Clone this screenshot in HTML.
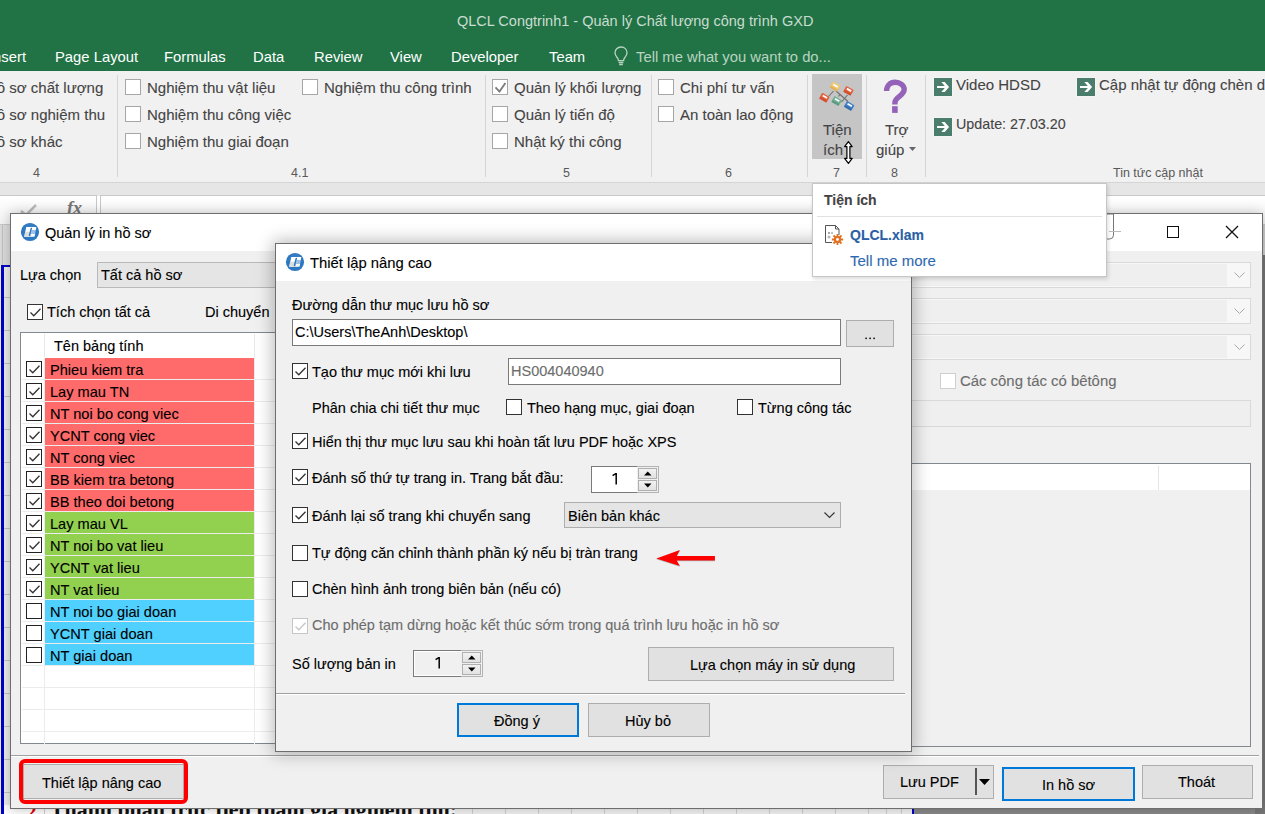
<!DOCTYPE html>
<html><head><meta charset="utf-8">
<style>
*{box-sizing:border-box}
html,body{margin:0;padding:0}
body{width:1265px;height:814px;overflow:hidden;position:relative;background:#fff;font-family:"Liberation Sans",sans-serif;color:#000;-webkit-text-stroke:0.12px currentColor}
.a{position:absolute}
.t{position:absolute;white-space:nowrap;line-height:1}
.cb{position:absolute;width:15px;height:15px;border:1px solid #333;background:#fff}
.rcb{position:absolute;width:16px;height:16px;border:1px solid #a6a6a6;background:#fff}
.tab{-webkit-text-stroke:0;position:absolute;top:50px;font-size:14.8px;color:#fff;white-space:nowrap;line-height:1}
.rt{-webkit-text-stroke:0.1px currentColor;position:absolute;font-size:15px;color:#444;white-space:nowrap;line-height:1}
.gl{-webkit-text-stroke:0;position:absolute;top:166.5px;font-size:12.5px;color:#595959;white-space:nowrap;line-height:1}
.sep{position:absolute;top:75px;width:1px;height:102px;background:#d6d6d6}
.dt{position:absolute;font-size:14.5px;color:#000;white-space:nowrap;line-height:1}
.btn{position:absolute;background:#e1e1e1;border:1px solid #adadad}
.row{position:absolute;left:21px;width:233px;height:22px}
</style></head><body>

<!-- title bar + tabs -->
<div class="a" style="left:0;top:0;width:1265px;height:71px;background:#217346"></div>
<div class="t" style="left:457px;top:14px;font-size:14.5px;color:#c9dccf;-webkit-text-stroke:0">QLCL Congtrinh1 - Quản lý Chất lượng công trình GXD</div>

<div class="tab" style="left:-11px">Insert</div>
<div class="tab" style="left:55px">Page Layout</div>
<div class="tab" style="left:164px">Formulas</div>
<div class="tab" style="left:253px">Data</div>
<div class="tab" style="left:314px">Review</div>
<div class="tab" style="left:390px">View</div>
<div class="tab" style="left:451px">Developer</div>
<div class="tab" style="left:549px">Team</div>
<svg class="a" style="left:613px;top:45px" width="16" height="22" viewBox="0 0 16 22"><path d="M8 2 C4.4 2 2 4.6 2 7.8 C2 10.2 3.4 11.6 4.5 13 C5.2 13.9 5.4 14.8 5.4 15.6 H10.6 C10.6 14.8 10.8 13.9 11.5 13 C12.6 11.6 14 10.2 14 7.8 C14 4.6 11.6 2 8 2Z" fill="none" stroke="#b9d3c0" stroke-width="1.3"/><path d="M5.6 17.4H10.4M6.2 19.4H9.8" stroke="#b9d3c0" stroke-width="1.5"/></svg>
<div class="tab" style="left:636px;color:#b9d3c0">Tell me what you want to do...</div>

<!-- ribbon -->
<div class="a" style="left:0;top:71px;width:1265px;height:112px;background:#f1f1f1;border-bottom:1px solid #d5d5d5"></div>
<div class="a" style="left:0;top:183px;width:1265px;height:13px;background:#e6e6e6"></div>


<!-- group 4 -->
<div class="rt" style="left:-14px;top:79.5px">Hồ sơ chất lượng</div>
<div class="rt" style="left:-14px;top:106.5px">Hồ sơ nghiệm thu</div>
<div class="rt" style="left:-14px;top:133.5px">Hồ sơ khác</div>
<div class="gl" style="left:33px">4</div>
<div class="sep" style="left:117px"></div>
<!-- group 4.1 -->
<div class="rcb" style="left:125px;top:79px"></div><div class="rt" style="left:147px;top:79.5px">Nghiệm thu vật liệu</div>
<div class="rcb" style="left:125px;top:106px"></div><div class="rt" style="left:147px;top:106.5px">Nghiệm thu công việc</div>
<div class="rcb" style="left:125px;top:133px"></div><div class="rt" style="left:147px;top:133.5px">Nghiệm thu giai đoạn</div>
<div class="rcb" style="left:302px;top:79px"></div><div class="rt" style="left:324px;top:79.5px">Nghiệm thu công trình</div>
<div class="gl" style="left:291px">4.1</div>
<div class="sep" style="left:485px"></div>
<!-- group 5 -->
<div class="rcb" style="left:492px;top:79px"><svg class="a" style="left:1px;top:1px" width="14" height="14" viewBox="0 0 14 14"><path d="M1.5 6.3 L5.5 10.5 L11.4 2" fill="none" stroke="#7a7a7a" stroke-width="1.8"/></svg></div><div class="rt" style="left:514px;top:79.5px">Quản lý khối lượng</div>
<div class="rcb" style="left:492px;top:106px"></div><div class="rt" style="left:514px;top:106.5px">Quản lý tiến độ</div>
<div class="rcb" style="left:492px;top:133px"></div><div class="rt" style="left:514px;top:133.5px">Nhật ký thi công</div>
<div class="gl" style="left:563px">5</div>
<div class="sep" style="left:651px"></div>
<!-- group 6 -->
<div class="rcb" style="left:658px;top:79px"></div><div class="rt" style="left:680px;top:79.5px">Chi phí tư vấn</div>
<div class="rcb" style="left:658px;top:106px"></div><div class="rt" style="left:680px;top:106.5px">An toàn lao động</div>
<div class="gl" style="left:725px">6</div>
<div class="sep" style="left:807px"></div>
<!-- group 7 -->
<div class="a" style="left:812px;top:74px;width:50px;height:85px;background:#c5c5c5"></div>
<svg class="a" style="left:814px;top:78px" width="46" height="36" viewBox="0 0 46 36"><path d="M19.5 13 L14.5 18.5 M22 13 L34 23.5 M24.5 18.5 L26 16 M33.5 17 L27.5 24" stroke="#6e6e6e" stroke-width="1.1" fill="none"/><g transform="translate(21,8.6) rotate(30) scale(0.9)"><rect x="-4.6" y="-2.6" width="9.2" height="6.4" fill="#e3b257"/><rect x="-4.6" y="-3.6" width="9.2" height="5" fill="#f4c96e"/><rect x="-2.8" y="-2.2" width="5.6" height="2" fill="#fff"/></g><g transform="translate(34.5,12.8) rotate(30) scale(0.9)"><rect x="-4.6" y="-2.6" width="9.2" height="6.4" fill="#cf4f2e"/><rect x="-4.6" y="-3.6" width="9.2" height="5" fill="#e5603c"/><rect x="-2.8" y="-2.2" width="5.6" height="2" fill="#fff"/></g><g transform="translate(10.4,19.7) rotate(30) scale(0.9)"><rect x="-4.6" y="-2.6" width="9.2" height="6.4" fill="#cf4f2e"/><rect x="-4.6" y="-3.6" width="9.2" height="5" fill="#e5603c"/><rect x="-2.8" y="-2.2" width="5.6" height="2" fill="#fff"/></g><g transform="translate(22.6,23) rotate(30) scale(0.9)"><rect x="-4.6" y="-2.6" width="9.2" height="6.4" fill="#5c9a80"/><rect x="-4.6" y="-3.6" width="9.2" height="5" fill="#70ae94"/><rect x="-2.8" y="-2.2" width="5.6" height="2" fill="#fff"/></g><g transform="translate(35.2,27.9) rotate(30) scale(0.9)"><rect x="-4.6" y="-2.6" width="9.2" height="6.4" fill="#336db0"/><rect x="-4.6" y="-3.6" width="9.2" height="5" fill="#4281c6"/><rect x="-2.8" y="-2.2" width="5.6" height="2" fill="#fff"/></g></svg>
<div class="rt" style="left:823px;top:122px">Tiện</div>
<div class="rt" style="left:823px;top:142px">ích</div>
<div class="gl" style="left:833px">7</div>
<div class="sep" style="left:866px"></div>
<!-- group 8 -->
<svg class="a" style="left:874px;top:76px" width="44" height="42" viewBox="0 0 44 42"><path d="M12.6 15 C12.6 9.5 16.2 6.3 21.1 6.3 C26.2 6.3 30.2 9.3 30.2 13.3 C30.2 17.3 26.5 19.5 23.8 21.8 C21.6 23.6 20.9 25 20.9 27 V28.6" fill="none" stroke="#9462b8" stroke-width="5.4"/><rect x="18.1" y="30.2" width="5.6" height="6.7" fill="#9462b8"/></svg>
<div class="rt" style="left:885px;top:122px">Trợ</div>
<div class="rt" style="left:876px;top:142px">giúp</div>
<svg class="a" style="left:909px;top:147px" width="7" height="4"><path d="M0 0H7L3.5 4Z" fill="#666"/></svg>
<div class="gl" style="left:891px">8</div>
<div class="sep" style="left:925px"></div>
<!-- tin tuc -->
<svg class="a" style="left:933px;top:77px" width="20" height="20" viewBox="-1 -1 20 20"><rect x="-0.5" y="-0.5" width="19" height="19" fill="#fff" opacity=".6"/><rect x="0" y="0" width="18" height="18" fill="#4a7d6b"/><path d="M3 8H12V10H3Z" fill="#fff"/><path d="M7.3 4.1 H10.7 L15.1 9 L10.7 13.9 H7.3 L11.7 9Z" fill="#fff"/></svg>
<div class="rt" style="left:956px;top:77px">Video HDSD</div>
<svg class="a" style="left:933px;top:117px" width="20" height="20" viewBox="-1 -1 20 20"><rect x="-0.5" y="-0.5" width="19" height="19" fill="#fff" opacity=".6"/><rect x="0" y="0" width="18" height="18" fill="#4a7d6b"/><path d="M3 8H12V10H3Z" fill="#fff"/><path d="M7.3 4.1 H10.7 L15.1 9 L10.7 13.9 H7.3 L11.7 9Z" fill="#fff"/></svg>
<div class="rt" style="left:956px;top:117px;font-size:14.3px">Update: 27.03.20</div>
<svg class="a" style="left:1076px;top:77px" width="20" height="20" viewBox="-1 -1 20 20"><rect x="-0.5" y="-0.5" width="19" height="19" fill="#fff" opacity=".6"/><rect x="0" y="0" width="18" height="18" fill="#4a7d6b"/><path d="M3 8H12V10H3Z" fill="#fff"/><path d="M7.3 4.1 H10.7 L15.1 9 L10.7 13.9 H7.3 L11.7 9Z" fill="#fff"/></svg>
<div class="rt" style="left:1099px;top:77px">Cập nhật tự động chèn dữ liệu</div>
<div class="gl" style="left:1113px">Tin tức cập nhật</div>


<!-- formula bar -->
<div class="a" style="left:-2px;top:195px;width:99px;height:30px;background:linear-gradient(#fff,#f4f4f4);border:1px solid #c8c8c8"></div>
<div class="a" style="left:100px;top:195px;width:1170px;height:30px;background:linear-gradient(#fff,#f7f7f7);border:1px solid #c8c8c8"></div>
<div class="t" style="left:67px;top:198px;font:italic bold 18px 'Liberation Serif',serif;color:#777">fx</div>
<svg class="a" style="left:19px;top:203px" width="20" height="12"><path d="M2 8 L7 12 L17 2" fill="none" stroke="#bbb" stroke-width="2.5"/></svg>
<!-- sheet strip left -->
<div class="a" style="left:0;top:225px;width:12px;height:600px;background:#ededed"></div>
<div class="a" style="left:0;top:225px;width:12px;height:40px;background:#dcdcdc"></div>
<div class="a" style="left:2px;top:225px;width:1px;height:40px;background:#c0c0c0"></div>
<div class="a" style="left:4px;top:297px;width:8px;height:1px;background:#c4c4c4"></div><div class="a" style="left:4px;top:330px;width:8px;height:1px;background:#c4c4c4"></div><div class="a" style="left:4px;top:363px;width:8px;height:1px;background:#c4c4c4"></div><div class="a" style="left:4px;top:396px;width:8px;height:1px;background:#c4c4c4"></div><div class="a" style="left:4px;top:429px;width:8px;height:1px;background:#c4c4c4"></div><div class="a" style="left:4px;top:462px;width:8px;height:1px;background:#c4c4c4"></div><div class="a" style="left:4px;top:495px;width:8px;height:1px;background:#c4c4c4"></div><div class="a" style="left:4px;top:528px;width:8px;height:1px;background:#c4c4c4"></div><div class="a" style="left:4px;top:561px;width:8px;height:1px;background:#c4c4c4"></div><div class="a" style="left:4px;top:594px;width:8px;height:1px;background:#c4c4c4"></div><div class="a" style="left:4px;top:627px;width:8px;height:1px;background:#c4c4c4"></div><div class="a" style="left:4px;top:660px;width:8px;height:1px;background:#c4c4c4"></div><div class="a" style="left:4px;top:693px;width:8px;height:1px;background:#c4c4c4"></div><div class="a" style="left:4px;top:726px;width:8px;height:1px;background:#c4c4c4"></div><div class="a" style="left:4px;top:759px;width:8px;height:1px;background:#c4c4c4"></div><div class="a" style="left:4px;top:792px;width:8px;height:1px;background:#c4c4c4"></div>
<div class="a" style="left:1px;top:265px;width:3px;height:549px;background:#0000c8"></div>
<div class="a" style="left:1px;top:265px;width:11px;height:2px;background:#0000c8"></div>
<!-- sheet strip bottom -->
<div class="a" style="left:4px;top:805px;width:1261px;height:9px;background:#fff"></div>
<div class="a" style="left:455px;top:805px;width:457px;height:9px;background:#f3f3f3"></div>
<div class="a" style="left:472px;top:805px;width:1px;height:9px;background:#d0d0d0"></div><div class="a" style="left:505px;top:805px;width:1px;height:9px;background:#d0d0d0"></div><div class="a" style="left:538px;top:805px;width:1px;height:9px;background:#d0d0d0"></div><div class="a" style="left:571px;top:805px;width:1px;height:9px;background:#d0d0d0"></div><div class="a" style="left:604px;top:805px;width:1px;height:9px;background:#d0d0d0"></div><div class="a" style="left:637px;top:805px;width:1px;height:9px;background:#d0d0d0"></div><div class="a" style="left:670px;top:805px;width:1px;height:9px;background:#d0d0d0"></div><div class="a" style="left:703px;top:805px;width:1px;height:9px;background:#d0d0d0"></div><div class="a" style="left:736px;top:805px;width:1px;height:9px;background:#d0d0d0"></div><div class="a" style="left:769px;top:805px;width:1px;height:9px;background:#d0d0d0"></div><div class="a" style="left:802px;top:805px;width:1px;height:9px;background:#d0d0d0"></div><div class="a" style="left:835px;top:805px;width:1px;height:9px;background:#d0d0d0"></div><div class="a" style="left:868px;top:805px;width:1px;height:9px;background:#d0d0d0"></div><div class="a" style="left:901px;top:805px;width:1px;height:9px;background:#d0d0d0"></div>
<div class="a" style="left:44px;top:805px;width:1px;height:9px;background:#d0d0d0"></div>
<div class="a" style="left:886px;top:805px;width:1px;height:9px;background:#d0d0d0"></div>
<div class="a" style="left:912px;top:805px;width:2px;height:9px;background:#0000c8"></div>
<div class="a" style="left:914px;top:805px;width:351px;height:9px;background:#8a8a8a"></div>
<div class="a" style="left:1255px;top:225px;width:10px;height:30px;background:#d0d0d0"></div><div class="a" style="left:1255px;top:255px;width:10px;height:560px;background:#777"></div>
<div class="t" style="left:27px;top:801px;font:bold 19px 'Liberation Serif',serif;color:#d00">2.</div>
<div class="t" style="left:50px;top:797px;font:bold 23px 'Liberation Serif',serif;color:#111;transform:scaleX(0.95);transform-origin:0 0">Thành phần trực tiếp tham gia nghiệm thu:</div>
<!-- DIALOG 1 -->
<div class="a" style="left:10px;top:213px;width:1253px;height:596px;background:#f0f0f0;border:1px solid #6e6e6e;box-shadow:0 0 12px rgba(0,0,0,.25)"></div>
<div class="a" style="left:11px;top:214px;width:1251px;height:37px;background:#fff"></div>

<!-- dialog1 content -->
<svg class="a" style="left:20px;top:222px" width="20" height="20" viewBox="0 0 20 20"><circle cx="10" cy="10" r="9.1" fill="#2d78c2"/><circle cx="10" cy="7" r="6" fill="#3d80c2" opacity=".5"/><path d="M6.3 5.1 H16.4 L15.7 8.5 H11.8 L11.3 12.1 H15.1 L14.5 14.8 H4.2 Z" fill="#fff"/><path d="M5.3 9.8 H11.6 L10.9 14.8 H4.2Z" fill="#dedede"/><path d="M11.8 8.5 H15.7 L15.1 12.1 H11.3Z" fill="#9cc2e6"/><path d="M11.3 6.4 L9.5 13.5" stroke="#2d78c2" stroke-width="1.5" stroke-linecap="round"/></svg>
<div class="t" style="left:45px;top:226px;font-size:14.5px;color:#000">Quản lý in hồ sơ</div>
<div class="dt" style="left:20px;top:268px">Lựa chọn</div>
<div class="btn" style="left:97px;top:262px;width:200px;height:26px;background:#e5e5e5;border-color:#b9b9b9"></div>
<div class="dt" style="left:101px;top:268px">Tất cả hồ sơ</div>
<div class="cb" style="left:27px;top:304px;width:16px;height:16px"><svg class="a" style="left:1px;top:2px" width="13" height="11" viewBox="0 0 13 11"><path d="M1.5 5.5 L4.8 8.8 L11.5 1.8" fill="none" stroke="#333" stroke-width="1.3"/></svg></div>
<div class="dt" style="left:47px;top:305px">Tích chọn tất cả</div>
<div class="dt" style="left:205px;top:305px">Di chuyển</div>
<div class="a" style="left:20px;top:332px;width:300px;height:412px;background:#fff;border:1px solid #828790"></div>
<div class="a" style="left:44px;top:334px;width:1px;height:23px;background:#e8e8e8"></div>
<div class="a" style="left:254px;top:334px;width:1px;height:23px;background:#e8e8e8"></div>
<div class="dt" style="left:54px;top:339px">Tên bảng tính</div>
<div class="a" style="left:22px;top:379px;width:300px;height:1px;background:#ececec"></div>
<div class="a" style="left:22px;top:401px;width:300px;height:1px;background:#ececec"></div>
<div class="a" style="left:22px;top:423px;width:300px;height:1px;background:#ececec"></div>
<div class="a" style="left:22px;top:445px;width:300px;height:1px;background:#ececec"></div>
<div class="a" style="left:22px;top:467px;width:300px;height:1px;background:#ececec"></div>
<div class="a" style="left:22px;top:489px;width:300px;height:1px;background:#ececec"></div>
<div class="a" style="left:22px;top:511px;width:300px;height:1px;background:#ececec"></div>
<div class="a" style="left:22px;top:533px;width:300px;height:1px;background:#ececec"></div>
<div class="a" style="left:22px;top:555px;width:300px;height:1px;background:#ececec"></div>
<div class="a" style="left:22px;top:577px;width:300px;height:1px;background:#ececec"></div>
<div class="a" style="left:22px;top:599px;width:300px;height:1px;background:#ececec"></div>
<div class="a" style="left:22px;top:621px;width:300px;height:1px;background:#ececec"></div>
<div class="a" style="left:22px;top:643px;width:300px;height:1px;background:#ececec"></div>
<div class="a" style="left:22px;top:665px;width:300px;height:1px;background:#ececec"></div>
<div class="a" style="left:22px;top:687px;width:300px;height:1px;background:#ececec"></div>
<div class="a" style="left:22px;top:709px;width:300px;height:1px;background:#ececec"></div>
<div class="a" style="left:22px;top:731px;width:300px;height:1px;background:#ececec"></div>

<div class="a" style="left:44px;top:358px;width:1px;height:386px;background:#ececec"></div>
<div class="a" style="left:254px;top:358px;width:1px;height:386px;background:#ececec"></div>
<div class="a" style="left:45px;top:358px;width:209px;height:21px;background:#ff6a6a"></div>
<div class="cb" style="left:26px;top:361px;width:16px;height:16px;border-color:#222"><svg class="a" style="left:1px;top:2px" width="13" height="11" viewBox="0 0 13 11"><path d="M1.5 5.5 L4.8 8.8 L11.5 1.8" fill="none" stroke="#333" stroke-width="1.3"/></svg></div>
<div class="t" style="left:50px;top:363px;font-size:14.6px;color:#000">Phieu kiem tra</div>
<div class="a" style="left:45px;top:380px;width:209px;height:21px;background:#ff6a6a"></div>
<div class="cb" style="left:26px;top:383px;width:16px;height:16px;border-color:#222"><svg class="a" style="left:1px;top:2px" width="13" height="11" viewBox="0 0 13 11"><path d="M1.5 5.5 L4.8 8.8 L11.5 1.8" fill="none" stroke="#333" stroke-width="1.3"/></svg></div>
<div class="t" style="left:50px;top:385px;font-size:14.6px;color:#000">Lay mau TN</div>
<div class="a" style="left:45px;top:402px;width:209px;height:21px;background:#ff6a6a"></div>
<div class="cb" style="left:26px;top:405px;width:16px;height:16px;border-color:#222"><svg class="a" style="left:1px;top:2px" width="13" height="11" viewBox="0 0 13 11"><path d="M1.5 5.5 L4.8 8.8 L11.5 1.8" fill="none" stroke="#333" stroke-width="1.3"/></svg></div>
<div class="t" style="left:50px;top:407px;font-size:14.6px;color:#000">NT noi bo cong viec</div>
<div class="a" style="left:45px;top:424px;width:209px;height:21px;background:#ff6a6a"></div>
<div class="cb" style="left:26px;top:427px;width:16px;height:16px;border-color:#222"><svg class="a" style="left:1px;top:2px" width="13" height="11" viewBox="0 0 13 11"><path d="M1.5 5.5 L4.8 8.8 L11.5 1.8" fill="none" stroke="#333" stroke-width="1.3"/></svg></div>
<div class="t" style="left:50px;top:429px;font-size:14.6px;color:#000">YCNT cong viec</div>
<div class="a" style="left:45px;top:446px;width:209px;height:21px;background:#ff6a6a"></div>
<div class="cb" style="left:26px;top:449px;width:16px;height:16px;border-color:#222"><svg class="a" style="left:1px;top:2px" width="13" height="11" viewBox="0 0 13 11"><path d="M1.5 5.5 L4.8 8.8 L11.5 1.8" fill="none" stroke="#333" stroke-width="1.3"/></svg></div>
<div class="t" style="left:50px;top:451px;font-size:14.6px;color:#000">NT cong viec</div>
<div class="a" style="left:45px;top:468px;width:209px;height:21px;background:#ff6a6a"></div>
<div class="cb" style="left:26px;top:471px;width:16px;height:16px;border-color:#222"><svg class="a" style="left:1px;top:2px" width="13" height="11" viewBox="0 0 13 11"><path d="M1.5 5.5 L4.8 8.8 L11.5 1.8" fill="none" stroke="#333" stroke-width="1.3"/></svg></div>
<div class="t" style="left:50px;top:473px;font-size:14.6px;color:#000">BB kiem tra betong</div>
<div class="a" style="left:45px;top:490px;width:209px;height:21px;background:#ff6a6a"></div>
<div class="cb" style="left:26px;top:493px;width:16px;height:16px;border-color:#222"><svg class="a" style="left:1px;top:2px" width="13" height="11" viewBox="0 0 13 11"><path d="M1.5 5.5 L4.8 8.8 L11.5 1.8" fill="none" stroke="#333" stroke-width="1.3"/></svg></div>
<div class="t" style="left:50px;top:495px;font-size:14.6px;color:#000">BB theo doi betong</div>
<div class="a" style="left:45px;top:512px;width:209px;height:21px;background:#92d050"></div>
<div class="cb" style="left:26px;top:515px;width:16px;height:16px;border-color:#222"><svg class="a" style="left:1px;top:2px" width="13" height="11" viewBox="0 0 13 11"><path d="M1.5 5.5 L4.8 8.8 L11.5 1.8" fill="none" stroke="#333" stroke-width="1.3"/></svg></div>
<div class="t" style="left:50px;top:517px;font-size:14.6px;color:#000">Lay mau VL</div>
<div class="a" style="left:45px;top:534px;width:209px;height:21px;background:#92d050"></div>
<div class="cb" style="left:26px;top:537px;width:16px;height:16px;border-color:#222"><svg class="a" style="left:1px;top:2px" width="13" height="11" viewBox="0 0 13 11"><path d="M1.5 5.5 L4.8 8.8 L11.5 1.8" fill="none" stroke="#333" stroke-width="1.3"/></svg></div>
<div class="t" style="left:50px;top:539px;font-size:14.6px;color:#000">NT noi bo vat lieu</div>
<div class="a" style="left:45px;top:556px;width:209px;height:21px;background:#92d050"></div>
<div class="cb" style="left:26px;top:559px;width:16px;height:16px;border-color:#222"><svg class="a" style="left:1px;top:2px" width="13" height="11" viewBox="0 0 13 11"><path d="M1.5 5.5 L4.8 8.8 L11.5 1.8" fill="none" stroke="#333" stroke-width="1.3"/></svg></div>
<div class="t" style="left:50px;top:561px;font-size:14.6px;color:#000">YCNT vat lieu</div>
<div class="a" style="left:45px;top:578px;width:209px;height:21px;background:#92d050"></div>
<div class="cb" style="left:26px;top:581px;width:16px;height:16px;border-color:#222"><svg class="a" style="left:1px;top:2px" width="13" height="11" viewBox="0 0 13 11"><path d="M1.5 5.5 L4.8 8.8 L11.5 1.8" fill="none" stroke="#333" stroke-width="1.3"/></svg></div>
<div class="t" style="left:50px;top:583px;font-size:14.6px;color:#000">NT vat lieu</div>
<div class="a" style="left:45px;top:600px;width:209px;height:21px;background:#4fd0ff"></div>
<div class="cb" style="left:26px;top:603px;width:16px;height:16px;border-color:#222"></div>
<div class="t" style="left:50px;top:605px;font-size:14.6px;color:#000">NT noi bo giai doan</div>
<div class="a" style="left:45px;top:622px;width:209px;height:21px;background:#4fd0ff"></div>
<div class="cb" style="left:26px;top:625px;width:16px;height:16px;border-color:#222"></div>
<div class="t" style="left:50px;top:627px;font-size:14.6px;color:#000">YCNT giai doan</div>
<div class="a" style="left:45px;top:644px;width:209px;height:21px;background:#4fd0ff"></div>
<div class="cb" style="left:26px;top:647px;width:16px;height:16px;border-color:#222"></div>
<div class="t" style="left:50px;top:649px;font-size:14.6px;color:#000">NT giai doan</div>
<div class="a" style="left:900px;top:262px;width:351px;height:26px;background:#f7f7f7;border:1px solid #d9d9d9"><div class="a" style="left:0;top:1px;width:326px;height:22px;background:#efefef"></div><svg class="a" style="left:333px;top:9px" width="11" height="7"><path d="M0.5 0.5 L5.5 5.5 L10.5 0.5" fill="none" stroke="#a8a8a8" stroke-width="1"/></svg></div>
<div class="a" style="left:900px;top:298px;width:351px;height:26px;background:#f7f7f7;border:1px solid #d9d9d9"><div class="a" style="left:0;top:1px;width:326px;height:22px;background:#efefef"></div><svg class="a" style="left:333px;top:9px" width="11" height="7"><path d="M0.5 0.5 L5.5 5.5 L10.5 0.5" fill="none" stroke="#a8a8a8" stroke-width="1"/></svg></div>
<div class="a" style="left:900px;top:334px;width:351px;height:26px;background:#f7f7f7;border:1px solid #d9d9d9"><div class="a" style="left:0;top:1px;width:326px;height:22px;background:#efefef"></div><svg class="a" style="left:333px;top:9px" width="11" height="7"><path d="M0.5 0.5 L5.5 5.5 L10.5 0.5" fill="none" stroke="#a8a8a8" stroke-width="1"/></svg></div>
<div class="rcb" style="left:940px;top:373px;width:16px;height:16px;border-color:#cfcfcf"></div>
<div class="t" style="left:960px;top:374px;font-size:14.9px;color:#6d6d6d">Các công tác có bêtông</div>
<div class="a" style="left:900px;top:400px;width:351px;height:27px;background:#efefef;border:1px solid #d9d9d9"></div>
<div class="a" style="left:900px;top:463px;width:351px;height:284px;background:#f0f0f0;border:1px solid #828790"><div class="a" style="left:0;top:0;width:349px;height:26px;background:#fff"></div><div class="a" style="left:257px;top:2px;width:1px;height:24px;background:#e5e5e5"></div></div>
<div class="a" style="left:11px;top:755px;width:1248px;height:1px;background:#a0a0a0"></div>
<div class="a" style="left:11px;top:756px;width:1248px;height:1px;background:#fff"></div>
<div class="btn" style="left:23px;top:764px;width:161px;height:35px"></div>
<div class="dt" style="left:42px;top:776px">Thiết lập nâng cao</div>
<div class="a" style="left:19px;top:759px;width:169px;height:45px;border:4px solid #f00;border-radius:6px"></div>
<div class="btn" style="left:883px;top:765px;width:111px;height:34px"></div>
<div class="dt" style="left:900px;top:775px">Lưu PDF</div>
<div class="a" style="left:975px;top:768px;width:2px;height:27px;background:#555"></div>
<svg class="a" style="left:979px;top:779px" width="11" height="6"><path d="M0 0H11L5.5 6Z" fill="#000"/></svg>
<div class="btn" style="left:1002px;top:767px;width:133px;height:34px;border:2px solid #0078d7"></div>
<div class="dt" style="left:1042px;top:778px">In hồ sơ</div>
<div class="btn" style="left:1142px;top:765px;width:111px;height:34px"></div>
<div class="dt" style="left:1178px;top:775px">Thoát</div>
<div class="a" style="left:1167px;top:226px;width:12px;height:12px;border:1.3px solid #111"></div>
<svg class="a" style="left:1225px;top:225px" width="14" height="14"><path d="M1 1L13 13M13 1L1 13" stroke="#111" stroke-width="1.3"/></svg>
<svg class="a" style="left:1100px;top:212px" width="24" height="30"><path d="M6 2 H13.5 V23 Q13.5 27 9.5 27 H6" fill="none" stroke="#777" stroke-width="1"/><path d="M9 19.5 H21" stroke="#bbb" stroke-width="1"/></svg>
<!-- DIALOG 2 -->
<div class="a" style="left:275px;top:243px;width:637px;height:509px;background:#f0f0f0;border:1px solid #6e6e6e;box-shadow:0 0 16px 2px rgba(0,0,0,.28)"></div>
<div class="a" style="left:276px;top:244px;width:635px;height:37px;background:#fff"></div>
<svg class="a" style="left:285px;top:252px" width="20" height="20" viewBox="0 0 20 20"><circle cx="10" cy="10" r="9.1" fill="#2d78c2"/><circle cx="10" cy="7" r="6" fill="#3d80c2" opacity=".5"/><path d="M6.3 5.1 H16.4 L15.7 8.5 H11.8 L11.3 12.1 H15.1 L14.5 14.8 H4.2 Z" fill="#fff"/><path d="M5.3 9.8 H11.6 L10.9 14.8 H4.2Z" fill="#dedede"/><path d="M11.8 8.5 H15.7 L15.1 12.1 H11.3Z" fill="#9cc2e6"/><path d="M11.3 6.4 L9.5 13.5" stroke="#2d78c2" stroke-width="1.5" stroke-linecap="round"/></svg>
<div class="t" style="left:310px;top:256px;font-size:14.8px;color:#000">Thiết lập nâng cao</div>
<div class="t" style="left:292px;top:297.7px;font-size:14.5px;color:#000">Đường dẫn thư mục lưu hồ sơ</div>
<div class="a" style="left:292px;top:319px;width:549px;height:27px;background:#fff;border:1px solid #7a7a7a"></div>
<div class="t" style="left:295px;top:324.7px;font-size:14.5px;color:#000">C:\Users\TheAnh\Desktop\</div>
<div class="btn" style="left:846px;top:320px;width:48px;height:27px"></div>
<svg class="a" style="left:864px;top:336px" width="12" height="4"><rect x="1.3" y="1.6" width="1.6" height="1.5" fill="#111"/><rect x="5.3" y="1.6" width="1.6" height="1.5" fill="#111"/><rect x="9.3" y="1.6" width="1.6" height="1.5" fill="#111"/></svg>
<div class="cb" style="left:292px;top:363px;width:16px;height:16px;border-color:#333"><svg class="a" style="left:1px;top:2px" width="13" height="11" viewBox="0 0 13 11"><path d="M1.5 5.5 L4.8 8.8 L11.5 1.8" fill="none" stroke="#333" stroke-width="1.3"/></svg></div>
<div class="t" style="left:312px;top:364.7px;font-size:14.5px;color:#000">Tạo thư mục mới khi lưu</div>
<div class="a" style="left:508px;top:358px;width:333px;height:27px;background:#fff;border:1px solid #7a7a7a"></div>
<div class="t" style="left:511px;top:363.7px;font-size:14.5px;color:#6d6d6d">HS004040940</div>
<div class="t" style="left:312px;top:400.7px;font-size:14.5px;color:#000">Phân chia chi tiết thư mục</div>
<div class="cb" style="left:506px;top:399px;width:16px;height:16px;border-color:#333"></div>
<div class="t" style="left:527px;top:400.7px;font-size:14.5px;color:#000">Theo hạng mục, giai đoạn</div>
<div class="cb" style="left:737px;top:399px;width:16px;height:16px;border-color:#333"></div>
<div class="t" style="left:758px;top:400.7px;font-size:14.5px;color:#000">Từng công tác</div>
<div class="cb" style="left:292px;top:433px;width:16px;height:16px;border-color:#333"><svg class="a" style="left:1px;top:2px" width="13" height="11" viewBox="0 0 13 11"><path d="M1.5 5.5 L4.8 8.8 L11.5 1.8" fill="none" stroke="#333" stroke-width="1.3"/></svg></div>
<div class="t" style="left:312px;top:434.7px;font-size:14.5px;color:#000">Hiển thị thư mục lưu sau khi hoàn tất lưu PDF hoặc XPS</div>
<div class="cb" style="left:292px;top:469px;width:16px;height:16px;border-color:#333"><svg class="a" style="left:1px;top:2px" width="13" height="11" viewBox="0 0 13 11"><path d="M1.5 5.5 L4.8 8.8 L11.5 1.8" fill="none" stroke="#333" stroke-width="1.3"/></svg></div>
<div class="t" style="left:312px;top:470.7px;font-size:14.5px;color:#000">Đánh số thứ tự trang in. Trang bắt đầu:</div>
<div class="a" style="left:591px;top:466px;width:68px;height:27px;background:#fff;border:1px solid #7a7a7a;border-right-color:#b4b4b4;box-shadow:inset 1px 1px 0 #fff, inset -1px -1px 0 #fff"></div><div class="a" style="left:637px;top:466px;width:22px;height:27px;background:#f0f0f0;border:1px solid #b4b4b4;border-left:none"></div><div class="a" style="left:638px;top:468px;width:19px;height:11px;background:linear-gradient(#f2f2f2,#e2e2e2);border:1px solid #b0b0b0"></div><div class="a" style="left:638px;top:480px;width:19px;height:11px;background:linear-gradient(#f2f2f2,#e2e2e2);border:1px solid #b0b0b0"></div><svg class="a" style="left:644px;top:471px" width="8" height="5"><path d="M0 4.5H7.5L3.75 0.5Z" fill="#000"/></svg><svg class="a" style="left:644px;top:483px" width="8" height="5"><path d="M0 0.5H7.5L3.75 4.5Z" fill="#000"/></svg>
<svg class="a" style="left:612px;top:473px" width="6" height="12" viewBox="0 0 6 12"><path d="M0.6 2.6 L4.2 0.4 V11.5" fill="none" stroke="#000" stroke-width="1.5"/></svg>
<div class="cb" style="left:292px;top:507px;width:16px;height:16px;border-color:#333"><svg class="a" style="left:1px;top:2px" width="13" height="11" viewBox="0 0 13 11"><path d="M1.5 5.5 L4.8 8.8 L11.5 1.8" fill="none" stroke="#333" stroke-width="1.3"/></svg></div>
<div class="t" style="left:312px;top:508.7px;font-size:14.5px;color:#000">Đánh lại số trang khi chuyển sang</div>
<div class="btn" style="left:564px;top:502px;width:277px;height:26px;background:#e5e5e5;border-color:#adadad"></div>
<div class="t" style="left:568px;top:508.7px;font-size:14.5px;color:#000">Biên bản khác</div>
<svg class="a" style="left:824px;top:512px" width="11" height="7"><path d="M0.5 0.5 L5.5 5.5 L10.5 0.5" fill="none" stroke="#333" stroke-width="1.1"/></svg>
<div class="cb" style="left:292px;top:545px;width:16px;height:16px;border-color:#333"></div>
<div class="t" style="left:312px;top:545.7px;font-size:14.5px;color:#000">Tự động căn chỉnh thành phần ký nếu bị tràn trang</div>
<svg class="a" style="left:650px;top:543px" width="72" height="30"><path d="M6.3 16.2 L29.9 7.9 L26.7 13.9 L64.9 13.9 L64.9 18.2 L26.7 18.2 L29.9 23.8 Z" fill="#6a8a8a" opacity=".5"/><path d="M6.3 15.4 L29.9 7.1 L26.7 13.1 L64.9 13.1 L64.9 17.4 L26.7 17.4 L29.9 23 Z" fill="#ff0000"/></svg>
<div class="cb" style="left:292px;top:581px;width:16px;height:16px;border-color:#333"></div>
<div class="t" style="left:312px;top:581.7px;font-size:14.5px;color:#000">Chèn hình ảnh trong biên bản (nếu có)</div>
<div class="cb" style="left:292px;top:618px;width:16px;height:16px;border-color:#c6c6c6"><svg class="a" style="left:1px;top:2px" width="13" height="11" viewBox="0 0 13 11"><path d="M1.5 5.5 L4.8 8.8 L11.5 1.8" fill="none" stroke="#c6c6c6" stroke-width="1.3"/></svg></div>
<div class="t" style="left:312px;top:617.7px;font-size:14.5px;color:#6d6d6d">Cho phép tạm dừng hoặc kết thúc sớm trong quá trình lưu hoặc in hồ sơ</div>
<div class="t" style="left:292px;top:656.7px;font-size:14.5px;color:#000">Số lượng bản in</div>
<div class="a" style="left:413px;top:650px;width:70px;height:27px;background:#f0f0f0;border:1px solid #7a7a7a;border-right-color:#b4b4b4;box-shadow:inset 1px 1px 0 #fff, inset -1px -1px 0 #fff"></div><div class="a" style="left:461px;top:650px;width:22px;height:27px;background:#f0f0f0;border:1px solid #b4b4b4;border-left:none"></div><div class="a" style="left:462px;top:652px;width:19px;height:11px;background:linear-gradient(#f2f2f2,#e2e2e2);border:1px solid #b0b0b0"></div><div class="a" style="left:462px;top:664px;width:19px;height:11px;background:linear-gradient(#f2f2f2,#e2e2e2);border:1px solid #b0b0b0"></div><svg class="a" style="left:468px;top:655px" width="8" height="5"><path d="M0 4.5H7.5L3.75 0.5Z" fill="#000"/></svg><svg class="a" style="left:468px;top:667px" width="8" height="5"><path d="M0 0.5H7.5L3.75 4.5Z" fill="#000"/></svg>
<svg class="a" style="left:435px;top:657px" width="6" height="12" viewBox="0 0 6 12"><path d="M0.6 2.6 L4.2 0.4 V11.5" fill="none" stroke="#000" stroke-width="1.5"/></svg>
<div class="btn" style="left:648px;top:647px;width:246px;height:34px"></div>
<div class="t" style="left:690px;top:657.7px;font-size:14.5px;color:#000">Lựa chọn máy in sử dụng</div>
<div class="a" style="left:276px;top:693px;width:629px;height:1px;background:#a0a0a0"></div>
<div class="a" style="left:276px;top:694px;width:629px;height:1px;background:#fff"></div>
<div class="btn" style="left:457px;top:703px;width:122px;height:34px;border:2px solid #0078d7"></div>
<div class="t" style="left:494px;top:713.7px;font-size:14.5px;color:#000">Đồng ý</div>
<div class="btn" style="left:588px;top:703px;width:122px;height:34px"></div>
<div class="t" style="left:625px;top:713.7px;font-size:14.5px;color:#000">Hủy bỏ</div>
<svg class="a" style="left:842px;top:139px" width="14" height="27" viewBox="0 0 14 27"><path d="M6.4 2.6 L10.2 7.6 L7.9 7.6 L7.9 19.4 L10.2 19.4 L6.4 24.4 L2.6 19.4 L4.9 19.4 L4.9 7.6 L2.6 7.6 Z" fill="#fff" stroke="#000" stroke-width="1.2" stroke-linejoin="round"/></svg>
<!-- TOOLTIP -->
<div class="a" style="left:812px;top:183px;width:295px;height:94px;background:#fff;border:1px solid #c6c6c6;box-shadow:1px 2px 4px rgba(0,0,0,.15)"></div>
<div class="t" style="left:824px;top:193px;font-weight:bold;font-size:14px;color:#444">Tiện ích</div>
<div class="a" style="left:817px;top:216px;width:285px;height:1px;background:#e1e1e1"></div>
<svg class="a" style="left:824px;top:224px" width="22" height="22" viewBox="0 0 22 22"><path d="M1.5 1.5 H11.5 L15 5 V11 M15 5 H11.5 V1.5 M1.5 1.5 V18.5 H8" fill="none" stroke="#555" stroke-width="1"/><circle cx="5" cy="9" r="1" fill="#888"/><circle cx="5" cy="13" r="1" fill="none" stroke="#888" stroke-width=".8"/><path d="M7 9H9" stroke="#888"/><g transform="translate(13.5,15.5)"><circle r="3.6" fill="#e07020"/><circle r="1.4" fill="#fff"/><path d="M0 -5.6V5.6M-5.6 0H5.6M-4 -4L4 4M4 -4L-4 4" stroke="#e07020" stroke-width="1.8"/><circle r="1.4" fill="#fff"/></g></svg>
<div class="t" style="left:850px;top:228px;font-weight:bold;font-size:14px;color:#2b5fa5">QLCL.xlam</div>
<div class="t" style="left:850px;top:253px;font-size:15px;color:#2e69b0">Tell me more</div>
</body></html>
